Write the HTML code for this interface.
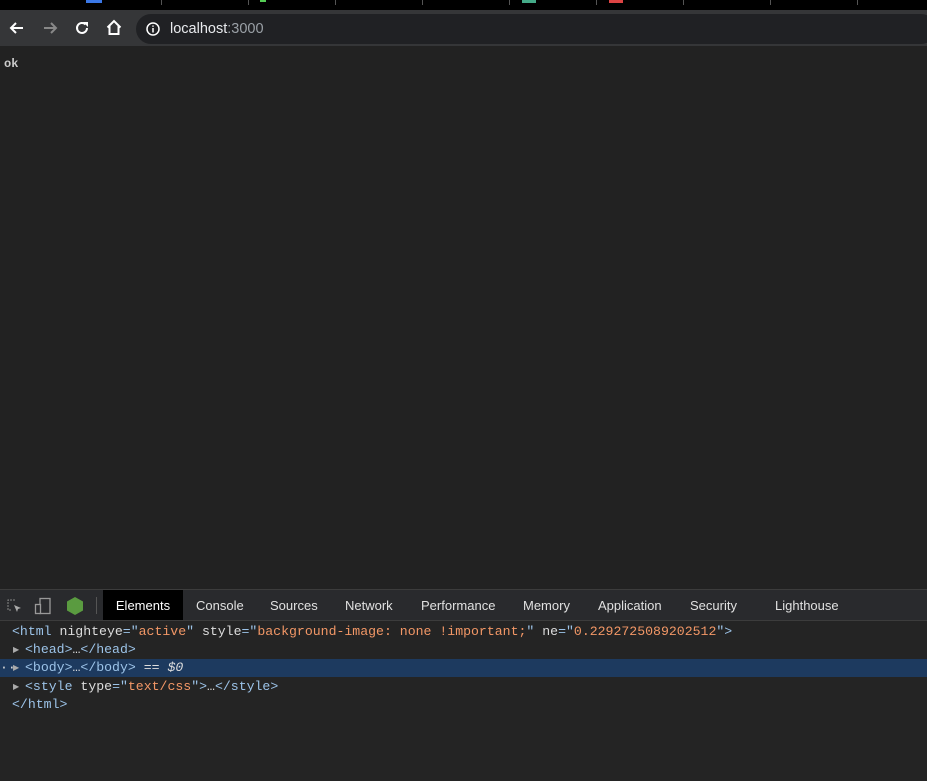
<!DOCTYPE html>
<html><head><style>
*{margin:0;padding:0;box-sizing:border-box}
body{width:927px;height:781px;background:#222222;position:relative;overflow:hidden;font-family:"Liberation Sans",sans-serif}
.tabs{position:absolute;top:0;left:0;width:927px;height:10px;background:#000}
.sep{position:absolute;top:0;width:1px;height:5px;background:#555}
.tb{position:absolute;top:10px;left:0;width:927px;height:36px;background:#353638}
.addr{position:absolute;left:136px;top:14px;width:800px;height:30px;border-radius:15px;background:#202124}
.addr span{position:absolute;left:34px;top:7px;font-size:14.5px;color:#e8eaed}
.ok{position:absolute;left:4px;top:57px;font-family:"Liberation Mono",monospace;font-weight:bold;font-size:12px;color:#ccc}
.dt{position:absolute;top:589px;left:0;width:927px;height:192px;background:#242424;border-top:1px solid #3c3c3c}
.dtb{position:absolute;top:0;left:0;width:927px;height:31px;background:#292a2d;border-bottom:1px solid #3c3c3c}
.tab{position:absolute;top:0;height:30px;line-height:31px;font-size:13px;color:#e0e0e0}
.code{position:absolute;left:0;font-family:"Liberation Mono",monospace;font-size:13.2px;color:#9cc3e8;height:18px;line-height:18px;white-space:pre;width:927px}
.code b{font-weight:normal;position:absolute;top:0}
.o{color:#f29766}.w{color:#ddd}
.tri{position:absolute;left:13px;top:0;color:#aaa;font-size:8px;font-family:"DejaVu Sans",sans-serif}
</style></head><body>
<div class="tabs">
<div style="position:absolute;left:86px;top:0;width:16px;height:3px;background:#3b78e7"></div>
<div class="sep" style="left:161px"></div><div class="sep" style="left:248px"></div><div class="sep" style="left:335px"></div><div class="sep" style="left:422px"></div><div class="sep" style="left:509px"></div><div class="sep" style="left:596px"></div><div class="sep" style="left:683px"></div><div class="sep" style="left:770px"></div><div class="sep" style="left:857px"></div>
<div style="position:absolute;left:260px;top:0;width:6px;height:2px;background:#5c5"></div>
<div style="position:absolute;left:522px;top:0;width:14px;height:3px;background:#4a8"></div>
<div style="position:absolute;left:609px;top:0;width:14px;height:3px;background:#d44"></div>
</div>
<div class="tb">
<svg style="position:absolute;left:8px;top:9px" width="18" height="18" viewBox="0 0 18 18"><path d="M15 9H3M8 4L3 9l5 5" stroke="#fff" stroke-width="2" fill="none"/></svg>
<svg style="position:absolute;left:41px;top:9px" width="18" height="18" viewBox="0 0 18 18"><path d="M3 9h12M10 4l5 5-5 5" stroke="#888" stroke-width="2" fill="none"/></svg>
<svg style="position:absolute;left:73px;top:9px" width="18" height="18" viewBox="0 0 18 18"><path d="M14 9a5 5 0 1 1-1.5-3.6" stroke="#fff" stroke-width="2" fill="none"/><path d="M10 3h5v5z" fill="#fff"/></svg>
<svg style="position:absolute;left:105px;top:8px" width="18" height="18" viewBox="0 0 18 18"><path d="M2.5 9.5L9 3l6.5 6.5M4.5 8v8h9V8" stroke="#fff" stroke-width="2" fill="none"/></svg>
</div>
<div class="addr"><svg style="position:absolute;left:10px;top:8px" width="14" height="14" viewBox="0 0 14 14"><circle cx="7" cy="7" r="6" stroke="#fff" stroke-width="1.5" fill="none"/><path d="M7 6v4.5M7 3.5v1.2" stroke="#fff" stroke-width="1.5"/></svg><span>localhost<span style="position:static;color:#9aa0a6">:3000</span></span></div>
<div class="ok">ok</div>
<div class="dt">
<div class="dtb">
<svg style="position:absolute;left:6px;top:8px" width="16" height="16" viewBox="0 0 16 16"><path d="M9 2H2v10h4" stroke="#888" fill="none" stroke-dasharray="2 1"/><path d="M8 7l7 3-3 1-1 3z" fill="#aaa"/></svg>
<svg style="position:absolute;left:34px;top:7px" width="18" height="18" viewBox="0 0 18 18"><rect x="6" y="1.5" width="10" height="15" stroke="#999" fill="none" stroke-width="1.3"/><rect x="1.5" y="7.5" width="5" height="9" stroke="#999" fill="#292a2d" stroke-width="1.3"/></svg>
<svg style="position:absolute;left:66px;top:6px" width="18" height="20" viewBox="0 0 18 20"><path d="M9 1l8 4.5v9L9 19l-8-4.5v-9z" fill="#5a9b40"/></svg>
<div style="position:absolute;left:96px;top:7px;width:1px;height:17px;background:#555"></div>
<div class="tab" style="left:103px;width:80px;background:#000;text-align:center;color:#fff">Elements</div>
<div class="tab" style="left:196px">Console</div>
<div class="tab" style="left:270px">Sources</div>
<div class="tab" style="left:345px">Network</div>
<div class="tab" style="left:421px">Performance</div>
<div class="tab" style="left:523px">Memory</div>
<div class="tab" style="left:598px">Application</div>
<div class="tab" style="left:690px">Security</div>
<div class="tab" style="left:775px">Lighthouse</div>
</div>
<div class="code" style="top:33px"><b style="left:12px">&lt;html <span class="w">nighteye</span>="<span class="o">active</span>" <span class="w">style</span>="<span class="o">background-image: none !important;</span>" <span class="w">ne</span>="<span class="o">0.2292725089202512</span>"&gt;</b></div>
<div class="code" style="top:51px"><span class="tri">▶</span><b style="left:25px">&lt;head&gt;<span class="w">…</span>&lt;/head&gt;</b></div>
<div class="code" style="top:69px;background:#1d3a5f"><b style="left:0;color:#ddd">··</b><span class="tri">▶</span><b style="left:25px">&lt;body&gt;<span class="w">…</span>&lt;/body&gt; <span class="w">== <i>$0</i></span></b></div>
<div class="code" style="top:88px"><span class="tri">▶</span><b style="left:25px">&lt;style <span class="w">type</span>="<span class="o">text/css</span>"&gt;<span class="w">…</span>&lt;/style&gt;</b></div>
<div class="code" style="top:106px"><b style="left:12px">&lt;/html&gt;</b></div>
</div>
</body></html>
